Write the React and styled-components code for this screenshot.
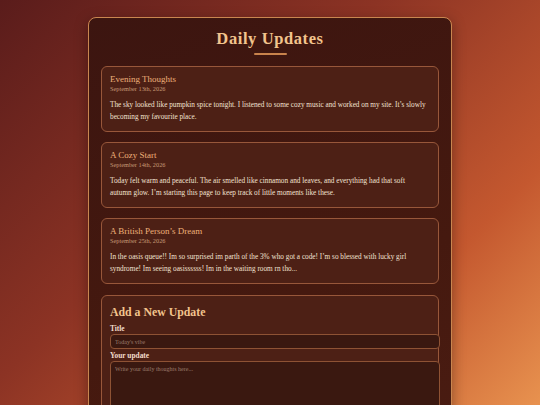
import React from 'react';
import styled, { createGlobalStyle } from 'styled-components';

const GlobalStyle = createGlobalStyle`
  html, body {
    margin: 0;
    padding: 0;
    height: 100%;
  }
  body {
    background: linear-gradient(135deg, #5a1c1b 0%, #8c3324 40%, #c4582f 75%, #e8924f 100%);
    font-family: Georgia, "Liberation Serif", "DejaVu Serif", serif;
    color: #f3e3cf;
    overflow: hidden;
  }
`;

const Page = styled.div`
  display: flex;
  justify-content: center;
  padding-top: 17px;
`;

const Journal = styled.div`
  box-sizing: border-box;
  width: 364px;
  padding: 10px 12px 20px;
  background: linear-gradient(160deg, #3c1510 0%, #45190f 60%, #4a1c12 100%);
  border: 1px solid #c98650;
  border-radius: 8px;
  box-shadow: 0 4px 14px rgba(0, 0, 0, 0.35);
`;

const Heading = styled.h1`
  margin: 0;
  text-align: center;
  font-size: 16.5px;
  font-weight: 700;
  letter-spacing: 0.6px;
  color: #f2c48d;
  line-height: 22px;
`;

const Rule = styled.div`
  width: 33px;
  height: 2px;
  margin: 3px auto 11px;
  background: #c9834c;
  border-radius: 1px;
`;

const Entries = styled.div`
  display: flex;
  flex-direction: column;
  gap: 10px;
`;

const Card = styled.div`
  box-sizing: border-box;
  border: 1px solid #98573a;
  border-radius: 6px;
  background: #4d2015;
  padding: 6px 12px 8px 8px;
`;

const EntryTitle = styled.div`
  font-size: 9px;
  line-height: 12px;
  color: #eeb07a;
`;

const EntryDate = styled.div`
  font-size: 6.3px;
  line-height: 8px;
  color: #c79a76;
  margin-bottom: 6px;
`;

const EntryText = styled.p`
  margin: 0;
  font-size: 7.25px;
  line-height: 12px;
  color: #f2e2d2;
`;

const FormCard = styled(Card)`
  margin-top: 11px;
  padding: 8px 8px 8px;
`;

const FormHeading = styled.h2`
  margin: 0 0 4px;
  font-size: 11.8px;
  line-height: 16px;
  font-weight: 700;
  color: #f2c48d;
`;

const Label = styled.label`
  display: block;
  font-size: 7.4px;
  font-weight: 700;
  line-height: 9px;
  color: #f1dccb;
  margin-bottom: 1px;
`;

const Input = styled.input`
  display: block;
  width: 100%;
  height: 13px;
  padding: 0 4px;
  margin: 0 0 2px;
  font-family: inherit;
  font-size: 6px;
  color: #f2e2d2;
  background: #3a1810;
  border: 1px solid #8e5234;
  border-radius: 4px;
  outline: none;
  &::placeholder {
    color: #9c7c6c;
  }
`;

const TextArea = styled.textarea`
  display: block;
  width: 100%;
  height: 70px;
  padding: 4px 4px;
  margin: 0;
  resize: none;
  font-family: inherit;
  font-size: 6px;
  color: #f2e2d2;
  background: #3a1810;
  border: 1px solid #8e5234;
  border-radius: 4px;
  outline: none;
  &::placeholder {
    color: #9c7c6c;
  }
`;

const entries = [
  {
    title: 'Evening Thoughts',
    date: 'September 13th, 2026',
    text: "The sky looked like pumpkin spice tonight. I listened to some cozy music and worked on my site. It\u2019s slowly becoming my favourite place.",
  },
  {
    title: 'A Cozy Start',
    date: 'September 14th, 2026',
    text: "Today felt warm and peaceful. The air smelled like cinnamon and leaves, and everything had that soft autumn glow. I\u2019m starting this page to keep track of little moments like these.",
  },
  {
    title: 'A British Person\u2019s Dream',
    date: 'September 25th, 2026',
    text: "In the oasis queue!! Im so surprised im parth of the 3% who got a code! I\u2019m so blessed with lucky girl syndrome! Im seeing oasissssss! Im in the waiting room rn tho...",
  },
];

export default function App() {
  return (
    <>
      <GlobalStyle />
      <Page>
        <Journal>
          <Heading>Daily Updates</Heading>
          <Rule />
          <Entries>
            {entries.map((e) => (
              <Card key={e.title}>
                <EntryTitle>{e.title}</EntryTitle>
                <EntryDate>{e.date}</EntryDate>
                <EntryText>{e.text}</EntryText>
              </Card>
            ))}
          </Entries>
          <FormCard>
            <FormHeading>Add a New Update</FormHeading>
            <Label>Title</Label>
            <Input placeholder="Today's vibe" />
            <Label>Your update</Label>
            <TextArea placeholder="Write your daily thoughts here..." />
          </FormCard>
        </Journal>
      </Page>
    </>
  );
}
